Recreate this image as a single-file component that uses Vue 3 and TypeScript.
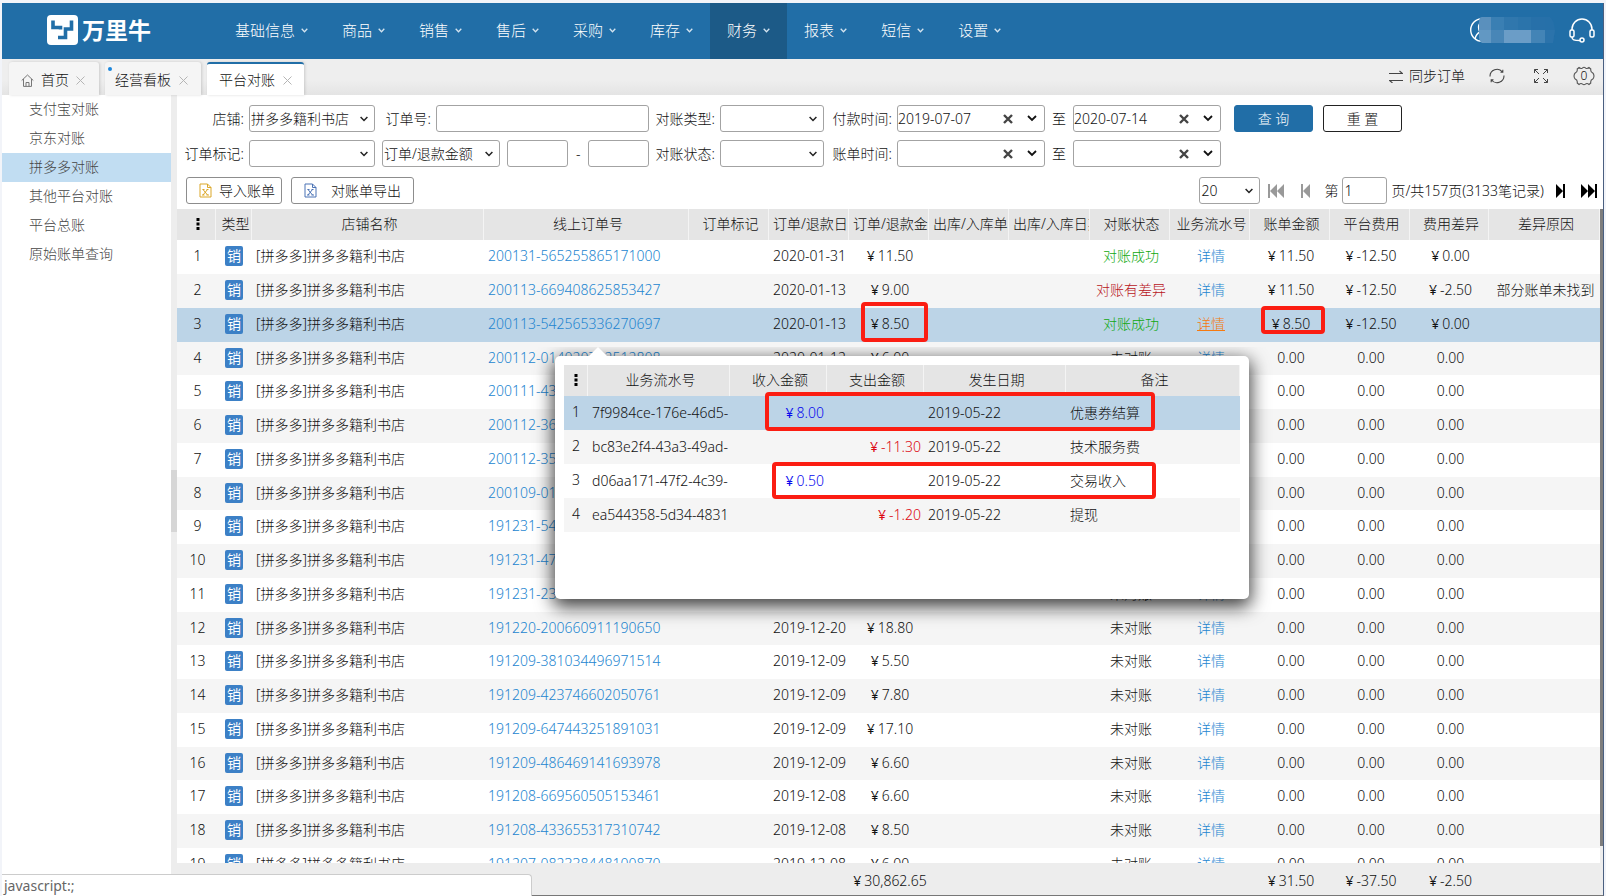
<script setup lang="ts">
import { ref } from 'vue'

interface Order {
  order: string
  date: string
  amount: string
  status: string
  bill: string
  fee: string
  diff: string
  reason?: string
}

interface Flow {
  id: string
  income: string
  expense: string
  date: string
  remark: string
}

const navItems = ['基础信息', '商品', '销售', '售后', '采购', '库存', '财务', '报表', '短信', '设置']
const activeNav = '财务'

const sideItems = ['支付宝对账', '京东对账', '拼多多对账', '其他平台对账', '平台总账', '原始账单查询']
const activeSide = '拼多多对账'

const columns = [
  '店铺名称', '线上订单号', '订单标记', '订单/退款日期', '订单/退款金额', '出库/入库单号', '出库/入库日期',
  '对账状态', '业务流水号', '账单金额', '平台费用', '费用差异', '差异原因',
]
const colClasses = [
  'c39', 'c36', 'c232', 'c205', 'c80', 'c80', 'c80', 'c80', 'c81', 'c80', 'c80', 'c80', 'c80', 'c79', 'rest',
]

const shop = '[拼多多]拼多多籍利书店'
const payFrom = ref('2019-07-07')
const payTo = ref('2020-07-14')
const billFrom = ref('')
const billTo = ref('')
const page = ref('1')
const selected = ref(2)

const pending = (order: string, date = '', amount = ''): Order => ({
  order, date, amount, status: '未对账', bill: '0.00', fee: '0.00', diff: '0.00',
})

const orders: Order[] = [
  { order: '200131-565255865171000', date: '2020-01-31', amount: '¥11.50', status: '对账成功', bill: '¥11.50', fee: '¥-12.50', diff: '¥0.00' },
  { order: '200113-669408625853427', date: '2020-01-13', amount: '¥9.00', status: '对账有差异', bill: '¥11.50', fee: '¥-12.50', diff: '¥-2.50', reason: '部分账单未找到' },
  { order: '200113-542565336270697', date: '2020-01-13', amount: '¥8.50', status: '对账成功', bill: '¥8.50', fee: '¥-12.50', diff: '¥0.00' },
  pending('200112-014020732512808', '2020-01-12', '¥6.00'),
  pending('200111-43'),
  pending('200112-36'),
  pending('200112-35'),
  pending('200109-01'),
  pending('191231-54'),
  pending('191231-47'),
  pending('191231-23'),
  pending('191220-200660911190650', '2019-12-20', '¥18.80'),
  pending('191209-381034496971514', '2019-12-09', '¥5.50'),
  pending('191209-423746602050761', '2019-12-09', '¥7.80'),
  pending('191209-647443251891031', '2019-12-09', '¥17.10'),
  pending('191209-486469141693978', '2019-12-09', '¥6.60'),
  pending('191208-669560505153461', '2019-12-08', '¥6.60'),
  pending('191208-433655317310742', '2019-12-08', '¥8.50'),
  pending('191207-082338448100870', '2019-12-08', '¥6.00'),
]

const flows: Flow[] = [
  { id: '7f9984ce-176e-46d5-', income: '¥8.00', expense: '', date: '2019-05-22', remark: '优惠券结算' },
  { id: 'bc83e2f4-43a3-49ad-', income: '', expense: '¥-11.30', date: '2019-05-22', remark: '技术服务费' },
  { id: 'd06aa171-47f2-4c39-', income: '¥0.50', expense: '', date: '2019-05-22', remark: '交易收入' },
  { id: 'ea544358-5d34-4831', income: '', expense: '¥-1.20', date: '2019-05-22', remark: '提现' },
]

const statusClass = (s: string) => (s === '对账成功' ? 'ok' : s === '对账有差异' ? 'bad' : '')
const isYen = (v: string) => v.startsWith('¥')
const digits = (v: string) => (isYen(v) ? v.slice(1) : v)
</script>

<template>
  <div class="frame">
    <div class="app">
      <header class="top">
        <a class="logo" href="#" aria-label="万里牛">
          <svg width="31" height="30" viewBox="0 0 31 30" aria-hidden="true">
            <rect width="31" height="30" rx="4" fill="#fff" />
            <path d="M6 5.500v7h7.500v2M24.500 5.500v8.500h-6v8.500h-7.500" fill="none" stroke="#216ea7" stroke-width="3.600" />
          </svg>
          <span>万里牛</span>
        </a>
        <nav class="nav">
          <button v-for="n in navItems" :key="n" type="button" :class="{ on: n === activeNav }">
            {{ n }}
            <svg width="7" height="5" viewBox="0 0 7 5"><path d="M.7.7 3.500 3.700 6.300.7" fill="none" stroke="#d4e4f0" stroke-width="1.300" /></svg>
          </button>
        </nav>
        <div class="account">
          <svg width="86" height="28" viewBox="0 0 86 28" aria-hidden="true">
            <circle cx="12" cy="14" r="11.300" fill="none" stroke="#fff" stroke-width="1.400" />
            <path d="M5 23c1-5 3-6 5-7-2-3-2-6 0-9" fill="none" stroke="#fff" stroke-width="1.400" />
            <path d="M9 6q0-5 3-5h9v13H9z" fill="#5a90bd" /><path d="M9 14h12v13h-9q-3-2-3-6z" fill="#6298c3" />
            <rect x="21" y="1" width="13" height="13" fill="#3a7fb3" /><rect x="21" y="14" width="13" height="13" fill="#4886b7" />
            <rect x="34" y="1" width="14" height="13" fill="#3077ad" /><rect x="34" y="14" width="27" height="13" fill="#6b9dc7" />
            <rect x="48" y="1" width="13" height="13" fill="#2b74ab" />
            <rect x="61" y="1" width="14" height="13" fill="#2770a9" /><rect x="61" y="14" width="14" height="13" fill="#4384b6" />
            <path d="M75 1h5q4 3 5 13l-2 13h-8z" fill="#2670a9" /><path d="M75 14h10l-2 13h-8z" fill="#2b73ab" />
            <rect x="21" y="0" width="65" height="1" fill="#216ea7" />
          </svg>
          <button type="button" class="ico" aria-label="客服">
            <svg width="26" height="25" viewBox="0 0 26 25" fill="none" stroke="#fff" stroke-width="1.500">
              <path d="M3 12v-1a10 10 0 0 1 20 0v1" />
              <rect x="1" y="12" width="4" height="7" rx="1.500" /><rect x="21" y="12" width="4" height="7" rx="1.500" />
              <path d="M3 19c0 3 2 3.500 8 3.500" /><circle cx="13" cy="22" r="2" />
            </svg>
          </button>
        </div>
      </header>

      <div class="tabbar">
        <div class="tab home">
          <svg width="13" height="13" viewBox="0 0 13 13" fill="none" stroke="#777"><path d="M.7 6.500 6.500 1l5.800 5.500M2.500 5v7.400h8V5M5 12.400V8.500h3v3.900" /></svg>
          <span>首页</span>
          <button type="button" class="x" aria-label="关闭首页"><svg width="9" height="9" viewBox="0 0 9 9"><path d="M.5.5l8 8m0-8-8 8" stroke="#b5b5b5" /></svg></button>
        </div>
        <div class="tab board">
          <i class="dot"></i>
          <span>经营看板</span>
          <button type="button" class="x" aria-label="关闭经营看板"><svg width="9" height="9" viewBox="0 0 9 9"><path d="M.5.5l8 8m0-8-8 8" stroke="#b5b5b5" /></svg></button>
        </div>
        <div class="tab current">
          <span>平台对账</span>
          <button type="button" class="x" aria-label="关闭平台对账"><svg width="9" height="9" viewBox="0 0 9 9"><path d="M.5.5l8 8m0-8-8 8" stroke="#b5b5b5" /></svg></button>
        </div>
        <div class="tools">
          <button type="button" class="ico sync">
            <svg width="14" height="13" viewBox="0 0 14 13" fill="none" stroke="#444" stroke-width="1.100"><path d="M0 3.500h13.500L10.500 1M14 10.500H.5L3.500 13" /></svg>
            同步订单
          </button>
          <button type="button" class="ico" aria-label="刷新">
            <svg width="16" height="16" viewBox="0 0 16 16" fill="none" stroke="#444" stroke-width="1.100"><path d="M1 8.500A7 7 0 0 1 13.500 4M15 7.500A7 7 0 0 1 2.500 12M13.800 1.800V4.300h-2.300M2.200 14.200v-2.500h2.300" /></svg>
          </button>
          <button type="button" class="ico" aria-label="全屏">
            <svg width="14" height="14" viewBox="0 0 14 14" fill="none" stroke="#444"><path d="M.5 4V.5H4M10 .5h3.500V4M13.500 10v3.500H10M4 13.500H.5V10M.5.5l4.500 4.500M13.500.5 9 5M13.500 13.500 9 9M.5 13.500 5 9" /></svg>
          </button>
          <button type="button" class="ico gear" aria-label="设置">
            <svg width="22" height="20" viewBox="0 0 22 20" fill="none" stroke="#555" stroke-width="1.100"><path d="M6 1.500q2 1.800 3.600.3 1.400-1.200 2.800 0 1.600 1.500 3.600-.3l1.800 1.500q-.6 3 2 4 1 .8 1.200 3-.2 2.200-1.200 3-2.600 1-2 4L16 18.500q-2-1.800-3.600-.3-1.400 1.200-2.800 0-1.600-1.500-3.600.3L4.200 17q.6-3-2-4-1-.8-1.200-3 .2-2.200 1.200-3 2.600-1 2-4z" /></svg>
            <span>0</span>
          </button>
        </div>
      </div>

      <div class="body">
        <aside class="side">
          <a v-for="s in sideItems" :key="s" href="#" :class="{ on: s === activeSide }">{{ s }}</a>
        </aside>
        <div class="gutter"><i></i></div>

        <main class="main">
          <form class="filters" @submit.prevent>
            <div class="frow">
              <div class="field">
                <label for="shop">店铺:</label>
                <div class="sel w126">
                  <select id="shop"><option>拼多多籍利书店</option></select>
                  <svg width="8" height="6" viewBox="0 0 8 6"><path d="M.6 1 4 4.500 7.400 1" /></svg>
                </div>
              </div>
              <div class="field">
                <label for="no">订单号:</label>
                <input id="no" type="text" class="txt w213" />
              </div>
              <div class="field">
                <label for="kind">对账类型:</label>
                <div class="sel w104">
                  <select id="kind"><option></option></select>
                  <svg width="8" height="6" viewBox="0 0 8 6"><path d="M.6 1 4 4.500 7.400 1" /></svg>
                </div>
              </div>
              <div class="field">
                <label for="pf">付款时间:</label>
                <div class="date">
                  <input id="pf" v-model="payFrom" type="text" />
                  <button type="button" aria-label="清除" @click="payFrom = ''"><svg width="10" height="10" viewBox="0 0 10 10"><path class="cross" d="M1 1l8 8m0-8-8 8" /></svg></button>
                  <button type="button" aria-label="选择日期"><svg width="10" height="7" viewBox="0 0 10 7"><path class="caret" d="M1 1 5 5 9 1" /></svg></button>
                </div>
                <label for="pt" class="to">至</label>
                <div class="date">
                  <input id="pt" v-model="payTo" type="text" />
                  <button type="button" aria-label="清除" @click="payTo = ''"><svg width="10" height="10" viewBox="0 0 10 10"><path class="cross" d="M1 1l8 8m0-8-8 8" /></svg></button>
                  <button type="button" aria-label="选择日期"><svg width="10" height="7" viewBox="0 0 10 7"><path class="caret" d="M1 1 5 5 9 1" /></svg></button>
                </div>
              </div>
              <div class="actions">
                <button type="submit" class="query">查 询</button>
                <button type="reset" class="reset">重 置</button>
              </div>
            </div>

            <div class="frow">
              <div class="field">
                <label for="mark">订单标记:</label>
                <div class="sel w126">
                  <select id="mark"><option></option></select>
                  <svg width="8" height="6" viewBox="0 0 8 6"><path d="M.6 1 4 4.500 7.400 1" /></svg>
                </div>
              </div>
              <div class="field spread">
                <div class="sel w118">
                  <select aria-label="金额类型"><option>订单/退款金额</option></select>
                  <svg width="8" height="6" viewBox="0 0 8 6"><path d="M.6 1 4 4.500 7.400 1" /></svg>
                </div>
                <input type="text" class="txt w61" aria-label="最小金额" />
                <span>-</span>
                <input type="text" class="txt w61" aria-label="最大金额" />
              </div>
              <div class="field">
                <label for="state">对账状态:</label>
                <div class="sel w104">
                  <select id="state"><option></option></select>
                  <svg width="8" height="6" viewBox="0 0 8 6"><path d="M.6 1 4 4.500 7.400 1" /></svg>
                </div>
              </div>
              <div class="field">
                <label for="bf">账单时间:</label>
                <div class="date">
                  <input id="bf" v-model="billFrom" type="text" />
                  <button type="button" aria-label="清除" @click="billFrom = ''"><svg width="10" height="10" viewBox="0 0 10 10"><path class="cross" d="M1 1l8 8m0-8-8 8" /></svg></button>
                  <button type="button" aria-label="选择日期"><svg width="10" height="7" viewBox="0 0 10 7"><path class="caret" d="M1 1 5 5 9 1" /></svg></button>
                </div>
                <label for="bt" class="to">至</label>
                <div class="date">
                  <input id="bt" v-model="billTo" type="text" />
                  <button type="button" aria-label="清除" @click="billTo = ''"><svg width="10" height="10" viewBox="0 0 10 10"><path class="cross" d="M1 1l8 8m0-8-8 8" /></svg></button>
                  <button type="button" aria-label="选择日期"><svg width="10" height="7" viewBox="0 0 10 7"><path class="caret" d="M1 1 5 5 9 1" /></svg></button>
                </div>
              </div>
            </div>

            <div class="bar">
              <button type="button" class="file gold">
                <svg width="13" height="15" viewBox="0 0 13 15"><path d="M1 1h7.500L12 4.500V14H1zM8.500 1v3.500H12M4 6.500l4.500 5.500M8.500 6.500 4 12M3 12h2.500M7.500 12H10M3.500 6.500h2M7.500 6.500h2" /></svg>
                导入账单
              </button>
              <button type="button" class="file navy">
                <svg width="13" height="15" viewBox="0 0 13 15"><path d="M1 1h7.500L12 4.500V14H1zM8.500 1v3.500H12M4 6.500l4.500 5.500M8.500 6.500 4 12M3 12h2.500M7.500 12H10M3.500 6.500h2M7.500 6.500h2" /></svg>
                对账单导出
              </button>
              <div class="pager">
                <div class="sel w61">
                  <select aria-label="每页条数"><option>20</option></select>
                  <svg width="8" height="6" viewBox="0 0 8 6"><path d="M.6 1 4 4.500 7.400 1" /></svg>
                </div>
                <button type="button" class="ico" aria-label="首页"><svg width="16" height="14" viewBox="0 0 16 14" fill="#999"><path d="M0 0h2v14H0zM9 0v14L2 7zM16 0v14L9 7z" /></svg></button>
                <button type="button" class="ico prev" aria-label="上一页"><svg width="9" height="14" viewBox="0 0 9 14" fill="#999"><path d="M0 0h2v14H0zM9 0v14L2 7z" /></svg></button>
                <label for="page">第</label>
                <input id="page" v-model="page" type="text" class="txt w45" />
                <span class="total">页/共157页(3133笔记录)</span>
                <button type="button" class="ico next" aria-label="下一页"><svg width="9" height="14" viewBox="0 0 9 14"><path d="M7 0h2v14H7zM0 0v14l7-7z" /></svg></button>
                <button type="button" class="ico" aria-label="末页"><svg width="16" height="14" viewBox="0 0 16 14"><path d="M14 0h2v14h-2zM7 0v14l7-7zM0 0v14l7-7z" /></svg></button>
              </div>
            </div>
          </form>

          <div class="gridwrap">
            <div class="sheet">
              <div class="scroll">
                <table class="grid">
                  <colgroup><col v-for="(c, k) in colClasses" :key="k" :class="c" /></colgroup>
                  <thead>
                    <tr>
                      <th aria-label="序号"><svg width="4" height="12" viewBox="0 0 4 12"><path d="M.5 0h3v3h-3zM.5 4.500h3v3h-3zM.5 9h3v3h-3z" /></svg></th>
                      <th>类型</th>
                      <th v-for="c in columns" :key="c">{{ c }}</th>
                    </tr>
                  </thead>
                  <tbody>
                    <tr v-for="(o, i) in orders" :key="o.order" :class="{ picked: i === selected }" @click="selected = i">
                      <td>{{ i + 1 }}</td>
                      <td class="tag"><b>销</b></td>
                      <td class="l">{{ shop }}</td>
                      <td class="l"><a href="#">{{ o.order }}</a></td>
                      <td></td>
                      <td class="l">{{ o.date }}</td>
                      <td><i v-if="isYen(o.amount)" class="yen">¥</i>{{ digits(o.amount) }}</td>
                      <td></td>
                      <td></td>
                      <td :class="statusClass(o.status)">{{ o.status }}</td>
                      <td><a href="#" :class="{ hot: i === 2 }">详情</a></td>
                      <td><i v-if="isYen(o.bill)" class="yen">¥</i>{{ digits(o.bill) }}</td>
                      <td><i v-if="isYen(o.fee)" class="yen">¥</i>{{ digits(o.fee) }}</td>
                      <td><i v-if="isYen(o.diff)" class="yen">¥</i>{{ digits(o.diff) }}</td>
                      <td>{{ o.reason }}</td>
                    </tr>
                  </tbody>
                </table>
              </div>
              <table class="grid totals" aria-label="合计">
                <colgroup><col v-for="(c, k) in colClasses" :key="k" :class="c" /></colgroup>
                <tfoot>
                  <tr>
                    <td colspan="6"></td>
                    <td><i class="yen">¥</i>30,862.65</td>
                    <td colspan="4"></td>
                    <td><i class="yen">¥</i>31.50</td>
                    <td><i class="yen">¥</i>-37.50</td>
                    <td><i class="yen">¥</i>-2.50</td>
                    <td></td>
                  </tr>
                </tfoot>
              </table>
            </div>
            <div class="track"><i></i></div>

            <div class="mark mark-amount"></div>
            <div class="mark mark-bill"></div>

            <section class="popup" aria-label="业务流水">
              <table class="grid flow">
                <colgroup><col class="c24" /><col class="c142" /><col class="c97" /><col class="c97" /><col class="c142" /><col /></colgroup>
                <thead>
                  <tr>
                    <th aria-label="序号"><svg width="4" height="12" viewBox="0 0 4 12"><path d="M.5 0h3v3h-3zM.5 4.500h3v3h-3zM.5 9h3v3h-3z" /></svg></th>
                    <th>业务流水号</th><th>收入金额</th><th>支出金额</th><th>发生日期</th><th>备注</th>
                  </tr>
                </thead>
                <tbody>
                  <tr v-for="(f, i) in flows" :key="f.id" :class="{ picked: i === 0 }">
                    <td>{{ i + 1 }}</td>
                    <td class="l">{{ f.id }}</td>
                    <td class="r in"><i v-if="f.income" class="yen">¥</i>{{ digits(f.income) }}</td>
                    <td class="r out"><i v-if="f.expense" class="yen">¥</i>{{ digits(f.expense) }}</td>
                    <td class="l">{{ f.date }}</td>
                    <td class="l">{{ f.remark }}</td>
                  </tr>
                </tbody>
              </table>
              <div class="mark mark-first"></div>
              <div class="mark mark-third"></div>
            </section>
          </div>
        </main>
      </div>
    </div>
    <div class="status">javascript:;</div>
  </div>
</template>

<style>
body { margin: 0; }
</style>

<style scoped>
* { box-sizing: border-box; }
.frame {
  position: relative;
  height: 100vh;
  padding: 3px 2px 0;
  background: #f2f4f9;
  overflow: hidden;
  font: 300 14px/20px "Noto Sans", "Noto Sans CJK SC", sans-serif;
  color: #111;
}
.app { display: flex; flex-direction: column; height: 100%; background: #fff; border-right: 1px solid #4a5f80; border-bottom: 1px solid #777; }
button, input, select { font: inherit; color: inherit; margin: 0; }
button { cursor: pointer; padding: 0; }
a { color: #2385d0; text-decoration: none; }

.top { flex: none; display: flex; align-items: stretch; height: 56px; background: #216ea7; color: #fff; }
.logo { display: flex; align-items: center; gap: 4px; width: 216px; padding: 0 0 2px 45px; color: #fff; font-size: 23px; line-height: 30px; font-weight: 700; }
.nav { display: flex; }
.nav button { display: flex; align-items: center; gap: 6px; padding: 0 17px 2px; border: 0; background: none; color: #fff; font-size: 15px; }
.nav button.on { background: #1c5a87; }
.account { display: flex; align-items: center; gap: 13px; margin-left: auto; padding: 0 8px 2px 0; }
.ico { display: flex; align-items: center; border: 0; background: none; }

.tabbar { flex: none; display: flex; align-items: flex-end; gap: 6px; height: 36px; padding-left: 7px; background: linear-gradient(#eee 60%, #e4e4e4); }
.tab { position: relative; display: flex; align-items: center; gap: 8px; height: 33px; padding: 3px 12px 0; background: #f5f5f5; border-radius: 3px 3px 0 0; box-shadow: 1px 0 3px rgba(0, 0, 0, .15); }
.home { gap: 7px; padding-right: 14px; }
.board { padding-left: 10px; padding-right: 13px; }
.current { background: #fff; border-top: 2px solid #216ea7; padding-top: 1px; }
.x { display: flex; border: 0; background: none; }
.dot { position: absolute; left: 3px; top: 5px; width: 4px; height: 4px; border-radius: 50%; background: #1a86dc; }
.tools { display: flex; align-items: center; align-self: stretch; margin-left: auto; padding: 0 8px 2px 0; }
.tools .ico { margin-left: 29px; }
.tools .sync { gap: 6px; margin: 0; }
.tools .sync + .ico { margin-left: 24px; }
.tools .gear { margin-left: 25px; }
.gear { display: grid; place-items: center; }
.gear svg, .gear span { grid-area: 1 / 1; }
.gear span { font-size: 12px; }

.body { flex: 1; min-height: 0; display: flex; }
.side { width: 169px; flex: none; color: #555; }
.side a { display: block; height: 29px; padding-left: 27px; line-height: 28px; color: #444; }
.side a.on { background: #c1ddf2; }
.gutter { flex: none; display: flex; align-items: center; width: 6px; padding-top: 12px; background: #ededed; }
.gutter i { width: 6px; height: 62px; background: #d6d6d6; }
.main { flex: 1; min-width: 0; display: flex; flex-direction: column; }

.filters { flex: none; display: flex; flex-direction: column; gap: 8px; padding: 10px 6px 5px 7px; }
.frow { display: grid; grid-template-columns: 191px 267px 168px 390px 1fr; gap: 7px; }
.field { display: flex; align-items: center; justify-content: flex-end; gap: 5px; white-space: nowrap; }
.spread { justify-content: space-between; }
.to { margin: 0 2px; }
.sel { position: relative; flex: none; height: 27px; }
.sel select { appearance: none; width: 100%; height: 27px; padding: 0 16px 0 1px; border: 1px solid #a3a3a3; border-radius: 3px; background: #fff; outline: 0; }
.sel svg { position: absolute; right: 7px; top: 11px; pointer-events: none; fill: none; stroke: #222; stroke-width: 1.5; }
.txt { flex: none; height: 27px; padding: 0 1px; border: 1px solid #a3a3a3; border-radius: 3px; background: #fff; outline: 0; }
.date { flex: none; display: flex; width: 148px; height: 27px; border: 1px solid #a3a3a3; border-radius: 3px; background: #fff; }
.date input { flex: 1; min-width: 0; padding: 0; border: 0; background: none; outline: 0; }
.date button { display: grid; place-items: center; width: 24px; border: 0; background: none; }
.cross { stroke: #444; stroke-width: 2.4; }
.caret { fill: none; stroke: #111; stroke-width: 1.8; }
.w126 { width: 126px; }
.w213 { width: 213px; }
.w118 { width: 118px; }
.w104 { width: 104px; }
.w61 { width: 61px; }
.w45 { width: 45px; }
.actions { display: flex; gap: 10px; padding-left: 6px; }
.query, .reset { width: 79px; height: 27px; border: 1px solid #216ea7; border-radius: 3px; background: #216ea7; color: #fff; }
.reset { border-color: #222; background: #fff; color: #111; }

.bar { display: flex; align-items: center; gap: 9px; padding: 2px 0 0 2px; }
.file { display: flex; align-items: center; gap: 7px; height: 27px; padding: 0 6px 0 12px; border: 1px solid #8d8d8d; border-radius: 3px; background: #fff; }
.file svg { fill: none; }
.gold svg { stroke: #dba728; }
.navy svg { stroke: #4a72b5; }
.navy { gap: 14px; padding-right: 12px; }
.pager { display: flex; align-items: center; margin-left: auto; gap: 4px; white-space: nowrap; }
.pager .sel { margin-right: 4px; }
.pager .prev { margin: 0 10px 0 13px; }
.pager .next { margin: 0 12px 0 8px; }

.gridwrap { position: relative; flex: 1; min-height: 0; display: flex; }
.sheet { flex: 1; min-width: 0; display: flex; flex-direction: column; }
.scroll { flex: 1; min-height: 0; overflow: hidden; }
.track { flex: none; width: 3px; padding-bottom: 49px; background: #ededed; }
.track i { display: block; height: 100%; background: #7d7d7d; }
.grid { width: 100%; table-layout: fixed; border-collapse: separate; border-spacing: 0; }
.c24 { width: 24px; }
.c36 { width: 36px; }
.c39 { width: 39px; }
.c79 { width: 79px; }
.c80 { width: 80px; }
.c81 { width: 81px; }
.c97 { width: 97px; }
.c142 { width: 142px; }
.c205 { width: 205px; }
.c232 { width: 232px; }
th { height: 31px; padding: 0 0 2px 4px; background: #e5e5e5; border-right: 1px solid #f4f4f4; font-weight: inherit; text-align: center; white-space: nowrap; overflow: hidden; }
th:first-child svg { display: block; margin: 0 auto; }
td { height: 34px; padding: 0 2px 2px 4px; text-align: center; white-space: nowrap; overflow: hidden; }
tbody tr:nth-child(4n) td { height: 33px; }
tbody tr:nth-child(even) { background: #f5f5f5; }
tbody tr.picked { background: #bcd4e7; }
.l { padding: 0 0 2px 4px; text-align: left; }
.r { padding: 0 3px 2px 0; text-align: right; }
.tag { padding: 0 0 2px; }
.tag b { display: block; width: 18px; height: 20px; margin: 0 auto; border-radius: 2px; background: #3c80c6; color: #fff; font-weight: 400; line-height: 19px; }
.yen { font-style: normal; font-weight: 400; margin-right: 3px; }
.ok { color: #0fa80f; }
.bad { color: #b8141b; }
.hot { color: #f57a10; text-decoration: underline; }
.totals { flex: none; background: #ededed; }
.totals td { height: 32px; padding-top: 4px; padding-bottom: 0; overflow: visible; }

.popup { position: absolute; left: 378px; top: 147px; width: 694px; height: 243px; padding: 9px 9px 0; background: #fff; border-radius: 5px; box-shadow: 0 6px 18px 2px rgba(0, 0, 0, .75); clip-path: inset(-9px -40px -40px -40px); z-index: 2; }
.popup::before { content: ""; position: absolute; left: 34px; top: -9px; border: solid transparent; border-width: 0 9px 9px; border-bottom-color: #fff; }
.flow th:first-child, .flow td:first-child { padding: 0 0 2px; }
.flow td { padding-bottom: 0; }
.flow tbody tr:nth-child(4n) td { height: 34px; }
.in { color: #0808ee; }
.out { color: #dc0812; }
.mark { position: absolute; z-index: 3; border: 4px solid #fb1d12; border-radius: 4px; pointer-events: none; }
.mark-amount { left: 684px; top: 93px; width: 67px; height: 40px; }
.mark-bill { left: 1084px; top: 97px; width: 64px; height: 28px; }
.mark-first { left: 210px; top: 36px; width: 390px; height: 39px; }
.mark-third { left: 217px; top: 106px; width: 384px; height: 37px; }

.status { position: absolute; left: 2px; bottom: 0; z-index: 4; width: 530px; height: 22px; padding-left: 2px; background: #fff; border-top: 1px solid #ccc; border-right: 1px solid #ccc; border-top-right-radius: 4px; color: #666; line-height: 22px; font-weight: 400; }
</style>
